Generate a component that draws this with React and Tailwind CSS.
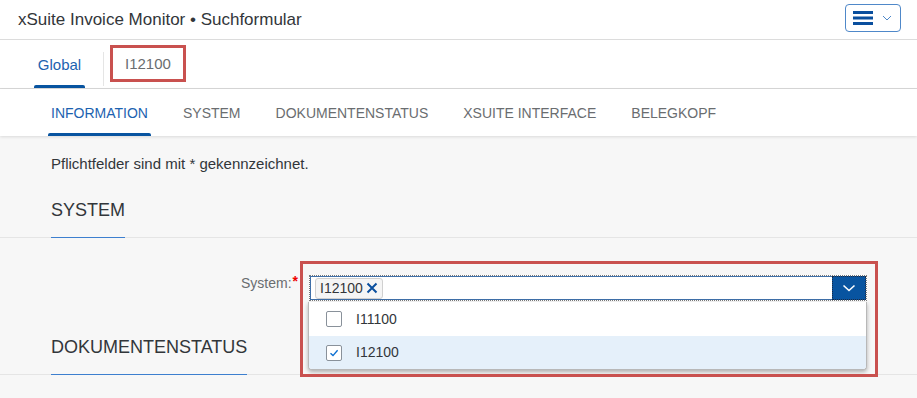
import React from 'react';

const tabs = ['INFORMATION', 'SYSTEM', 'DOKUMENTENSTATUS', 'XSUITE INTERFACE', 'BELEGKOPF'];

function Checkbox({ checked }) {
  return (
    <span className="w-[16px] h-[16px] rounded-[2px] border border-[#89919a] bg-white flex items-center justify-center">
      {checked && (
        <svg width="10" height="10" viewBox="0 0 10 10">
          <path d="M1.5 5.2 L4 7.6 L8.6 2.2" fill="none" stroke="#0a6ed1" strokeWidth="1.4" />
        </svg>
      )}
    </span>
  );
}

function SectionTitle({ children }) {
  return (
    <div className="border-b border-[#e5e5e5]">
      <div className="ml-[51px] w-fit pb-[15px] -mb-px border-b border-[#3d7fcf] text-[18px] leading-[24px] text-[#32363a]">
        {children}
      </div>
    </div>
  );
}

export default function App() {
  return (
    <div className="w-[917px] h-[398px] overflow-hidden bg-[#f7f7f7] flex flex-col" style={{ fontFamily: '"Liberation Sans", Arial, sans-serif' }}>
      {/* shell header */}
      <div className="h-[40px] bg-white border-b border-[#dcdcdc] flex items-center justify-between pl-[18px] pr-[16px]">
        <span className="text-[17px] text-[#32363a]">xSuite Invoice Monitor • Suchformular</span>
        <button className="w-[56px] h-[28px] mb-[4px] rounded-[4px] border border-[#4f88c9] bg-white flex items-center pl-[7px] gap-[9px]">
          <svg width="20" height="14" viewBox="0 0 20 14">
            <rect x="0" y="0" width="20" height="3" fill="#0a4f9e" />
            <rect x="0" y="5.5" width="20" height="3" fill="#0a4f9e" />
            <rect x="0" y="11" width="20" height="3" fill="#0a4f9e" />
          </svg>
          <svg width="10" height="6" viewBox="0 0 10 6">
            <path d="M1 1 L5 5 L9 1" fill="none" stroke="#4f88c9" strokeWidth="1" />
          </svg>
        </button>
      </div>

      {/* object tabs */}
      <div className="h-[49px] bg-white border-b border-[#d9d9d9] flex items-stretch">
        <div className="ml-[34px] w-[51px] flex flex-col items-center justify-end">
          <span className="text-[15px] text-[#1c62b0] mb-[9px]">Global</span>
          <span className="w-full h-[3px] rounded-t-[2px] bg-[#0854a0]"></span>
        </div>
        <div className="ml-[18px] mt-[12px] mb-[2px] w-px bg-[#e5e5e5]"></div>
        <div className="relative ml-[21px] flex items-center pt-[1px]">
          <span className="text-[15px] text-[#6a6d70]">I12100</span>
          <span className="absolute left-[-15px] top-[5px] w-[76px] h-[37px] border-[3px] border-[#c9514f]"></span>
        </div>
      </div>

      {/* section tabs */}
      <div className="h-[47px] bg-white shadow-[0_1px_3px_rgba(0,0,0,0.12)] flex items-stretch pl-[48px] gap-[29px] relative z-10">
        {tabs.map((t, i) => (
          <div key={t} className="flex flex-col justify-end">
            <span className={`px-[3px] text-[14px] mb-[9px] ${i === 0 ? 'text-[#1c62b0]' : 'text-[#6a6d70]'}`}>{t}</span>
            <span className={`h-[3px] rounded-t-[2px] ${i === 0 ? 'bg-[#0854a0]' : 'bg-transparent'}`}></span>
          </div>
        ))}
      </div>

      {/* content */}
      <div className="flex-1 pt-[18px]">
        <p className="pl-[51px] text-[15px] leading-[20px] text-[#32363a]">Pflichtfelder sind mit * gekennzeichnet.</p>
        <div className="mt-[24px]">
          <SectionTitle>SYSTEM</SectionTitle>
        </div>

        <div className="mt-[37px] flex items-start">
          <div className="w-[298px] flex justify-end">
            <span className="text-[14px] leading-[14px] text-[#6a6d70] mt-[1px]">System:</span>
            <span className="text-[14px] leading-[12px] text-[#e00] font-bold ml-[1px]">*</span>
          </div>
          <div className="relative ml-[11px] w-[558px] h-[26px]">
            <div className="h-full flex bg-white border border-dotted border-[#7a7a7a] shadow-[inset_0_0_0_1px_#3f6fa8]">
              <div className="flex-1 flex items-center pl-[5px]">
                <span className="h-[21px] px-[4px] flex items-center gap-[3px] rounded-[3px] border border-[#d0d0d0] bg-[#f5f5f5] text-[14px] text-[#32363a]">
                  I12100
                  <svg width="12" height="12" viewBox="0 0 12 12">
                    <path d="M1.5 1.5 L10.5 10.5 M10.5 1.5 L1.5 10.5" stroke="#0a4f9e" strokeWidth="2" />
                  </svg>
                </span>
              </div>
              <div className="w-[34px] bg-[#0854a0] border border-dotted border-[#1b2a44] flex items-center justify-center">
                <svg width="14" height="8" viewBox="0 0 14 8">
                  <path d="M1.5 1.5 L7 6.5 L12.5 1.5" fill="none" stroke="#ffffff" strokeWidth="1.6" />
                </svg>
              </div>
            </div>

            {/* popover */}
            <div className="absolute left-[-1px] top-[27px] w-[559px] bg-white rounded-b-[4px] border border-[#b8b8b8] border-t-0 shadow-[0_2px_4px_rgba(0,0,0,0.3)] z-20 overflow-hidden">
              <div className="h-[34px] flex items-center pl-[17px] gap-[14px] text-[14px] text-[#32363a]">
                <Checkbox />
                <span>I11100</span>
              </div>
              <div className="h-[33px] flex items-center pl-[17px] gap-[14px] text-[14px] text-[#32363a] bg-[#e5f0fa]">
                <Checkbox checked />
                <span>I12100</span>
              </div>
            </div>

            {/* annotation */}
            <span className="absolute left-[-9px] top-[-14px] w-[578px] h-[116px] border-[3px] border-[#c9514f] z-30 pointer-events-none"></span>
          </div>
        </div>

        <div className="mt-[34px]">
          <SectionTitle>DOKUMENTENSTATUS</SectionTitle>
        </div>
      </div>
    </div>
  );
}
